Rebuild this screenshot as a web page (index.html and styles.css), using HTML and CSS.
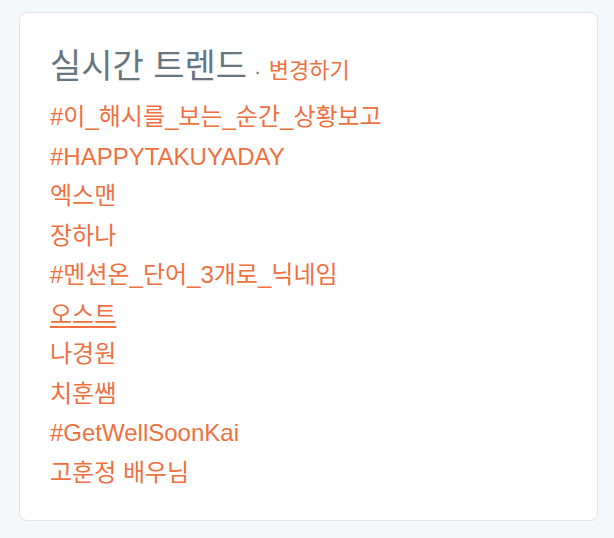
FILE: index.html
```html
<!DOCTYPE html>
<html lang="ko">
<head>
<meta charset="utf-8">
<link rel="stylesheet" href="styles.css">
</head>
<body>
<div class="page">
  <section class="card">
    <h2 class="title">실시간 트렌드<span class="sep">·</span><a class="change" href="#">변경하기</a></h2>
    <ul class="trends">
      <li><a href="#">#이_해시를_보는_순간_상황보고</a></li>
      <li><a href="#">#HAPPYTAKUYADAY</a></li>
      <li><a href="#">엑스맨</a></li>
      <li><a href="#">장하나</a></li>
      <li><a href="#">#멘션온_단어_3개로_닉네임</a></li>
      <li><a href="#" class="ul">오스트</a></li>
      <li><a href="#">나경원</a></li>
      <li><a href="#">치훈쌤</a></li>
      <li><a href="#">#GetWellSoonKai</a></li>
      <li><a href="#">고훈정 배우님</a></li>
    </ul>
  </section>
</div>
</body>
</html>
```

FILE: styles.css
```css
html, body {
  margin: 0;
  padding: 0;
  background: #f5f8fa;
}
body {
  font-family: "Liberation Sans", "Noto Sans CJK KR", sans-serif;
  width: 614px;
  height: 538px;
  overflow: hidden;
}
.page {
  padding: 12px 16px 0 19px;
}
.card {
  box-sizing: border-box;
  width: 579px;
  height: 509px;
  background: #fff;
  border: 1px solid #dfe5ea;
  border-radius: 8px;
  padding: 33px 30px 0 30px;
}
.title {
  margin: 0;
  font-weight: normal;
  font-size: 34px;
  line-height: 40px;
  color: #66757f;
  white-space: nowrap;
}
.sep {
  font-size: 20px;
  color: #66757f;
  margin: 0 8px 0 7px;
}
.change {
  font-size: 22px;
  color: #f0703f;
  text-decoration: none;
}
.trends {
  list-style: none;
  margin: 6px 0 0 0;
  padding: 0;
}
.trends li {
  font-size: 24px;
  line-height: 39.5px;
  white-space: nowrap;
}
.trends a {
  color: #f0703f;
  text-decoration: none;
}
.trends a.ul {
  text-decoration: underline;
  text-underline-offset: 3px;
}
```
